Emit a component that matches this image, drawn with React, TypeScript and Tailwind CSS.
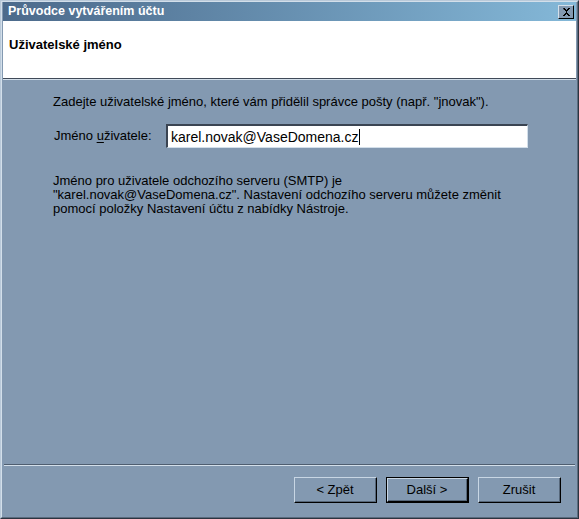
import React from 'react';

const font = { fontFamily: '"Liberation Sans", Arial, sans-serif' };

const WizButton: React.FC<{ children: React.ReactNode; isDefault?: boolean }> = ({ children, isDefault }) => (
  <div className={`w-[83px] h-[26px] ${isDefault ? 'border border-black' : ''}`}>
    <div className="w-full h-full border-t border-l border-[#c8d6e4] border-r border-b border-r-black border-b-black">
      <div className="w-full h-full border-r border-b border-[#56677a] flex items-center justify-center text-[13px] text-black">
        {children}
      </div>
    </div>
  </div>
);

const App: React.FC = () => {
  return (
    <div className="w-[579px] h-[519px] bg-[#8399b1]" style={font}>
      <div className="w-full h-full flex flex-col border-t border-l border-[#b9c9d9] border-r border-b border-r-[#2c3440] border-b-[#2c3440]">
        <div className="flex-1 flex flex-col border-t border-l border-[#d3dfea] border-r border-b border-r-[#5b6b7e] border-b-[#5b6b7e] pl-px pr-px">
          {/* Title bar */}
          <div className="h-[19px] shrink-0 flex items-center justify-between px-[2px] bg-gradient-to-r from-[#4c6a8b] to-[#84b8d8]">
            <span className="text-white font-bold text-[12.5px] pl-[3px] leading-none">Průvodce vytvářením účtu</span>
            <div className="w-[16px] h-[14px] bg-[#8399b1] border-t border-l border-[#d3dfea] border-r border-b border-r-black border-b-black flex items-center justify-center">
              <svg width="9" height="8" viewBox="0 0 9 8">
                <path d="M1 0h2v1h1v1h1v-1h1v-1h2v1h-1v1h-1v1h-1v2h1v1h1v1h1v1h-2v-1h-1v-1h-1v1h-1v1h-2v-1h1v-1h1v-1h1v-2h-1v-1h-1z" fill="#000" />
              </svg>
            </div>
          </div>

          {/* Header */}
          <div className="h-[58px] shrink-0 bg-white border-b border-b-[#404a58] pl-[6px] pt-[11px]">
            <span className="font-bold text-[13px] text-black">Uživatelské jméno</span>
          </div>
          <div className="h-px shrink-0 bg-[#d3dfea]" />

          {/* Body */}
          <div className="flex-1 flex flex-col pl-[50px] pt-[15px] text-[13px] text-black leading-[14px]">
            <p>Zadejte uživatelské jméno, které vám přidělil správce pošty (např. "jnovak").</p>
            <div className="flex items-center mt-[15px]">
              <span className="w-[113px] pl-[1px]">
                Jméno <span className="underline underline-offset-2">u</span>živatele:
              </span>
              <div className="w-[362px] h-[24px] bg-white border-t-2 border-l-2 border-t-[#3a4452] border-l-[#3a4452] border-r border-b border-r-[#d3dfea] border-b-[#d3dfea] flex items-center pl-[3px]">
                <span className="text-[14px] leading-none">karel.novak@VaseDomena.cz</span>
                <span className="w-px h-[16px] bg-black ml-px" />
              </div>
            </div>
            <p className="mt-[26px] w-[480px]">
              Jméno pro uživatele odchozího serveru (SMTP) je<br />
              "karel.novak@VaseDomena.cz". Nastavení odchozího serveru můžete změnit<br />
              pomocí položky Nastavení účtu z nabídky Nástroje.
            </p>
          </div>

          {/* Bottom separator */}
          <div className="shrink-0 mx-px h-px bg-[#4f5e70]" />
          <div className="shrink-0 mx-px h-px bg-[#d3dfea]" />

          {/* Buttons */}
          <div className="h-[51px] shrink-0 flex items-start justify-end gap-[9px] pt-[11px] pr-[15px]">
            <WizButton>&lt; Zpět</WizButton>
            <WizButton isDefault>Další &gt;</WizButton>
            <WizButton>Zrušit</WizButton>
          </div>
        </div>
      </div>
    </div>
  );
};

export default App;
